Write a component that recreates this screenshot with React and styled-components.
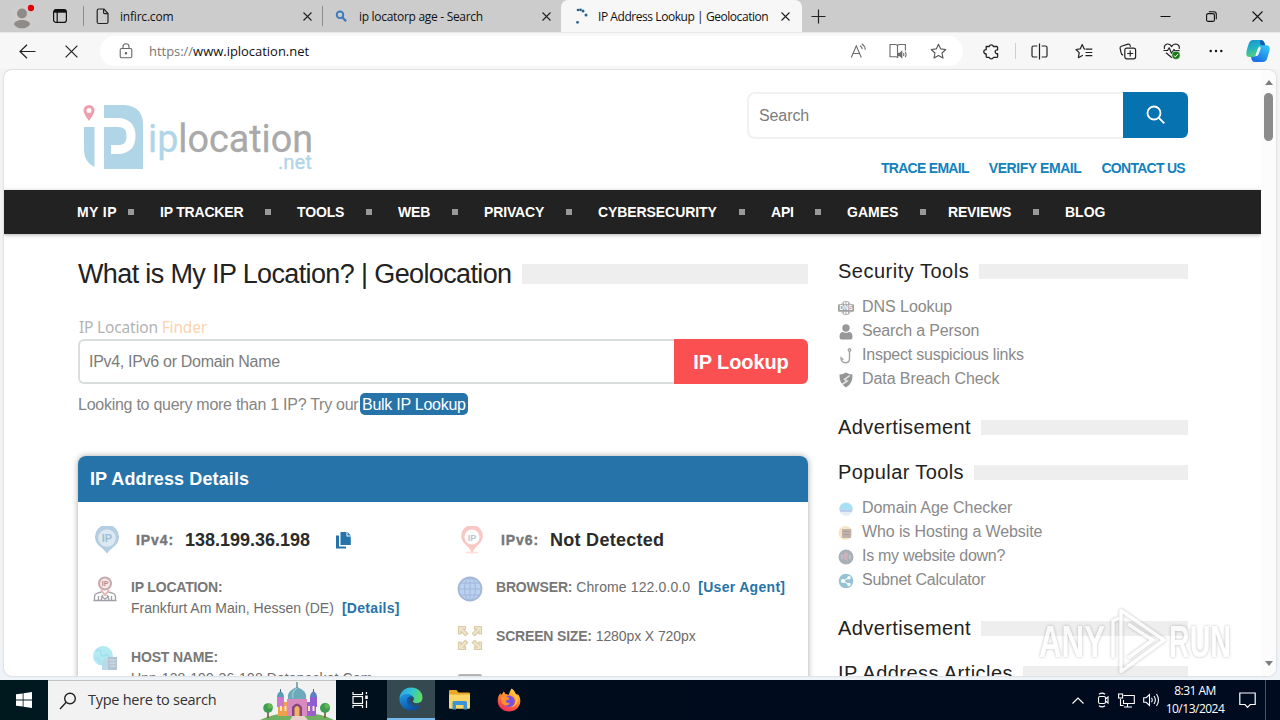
import React from "react";
import styled, { createGlobalStyle } from "styled-components";

const navItems = [
  { label: "MY IP", width: 83, ls: 0.4 },
  { label: "IP TRACKER", width: 137, ls: -0.2 },
  { label: "TOOLS", width: 101, ls: -0.15 },
  { label: "WEB", width: 86, ls: -0.2 },
  { label: "PRIVACY", width: 114, ls: -0.15 },
  { label: "CYBERSECURITY", width: 173, ls: -0.08 },
  { label: "API", width: 76, ls: -0.2 },
  { label: "GAMES", width: 101, gap: 22, ls: 0 },
  { label: "REVIEWS", width: 117, ls: -0.2 },
  { label: "BLOG", width: 60, ls: 0, last: true },
];

const topLinks = [
  { label: "TRACE EMAIL", ls: -0.72 },
  { label: "VERIFY EMAIL", ls: -0.42 },
  { label: "CONTACT US", ls: -0.72 },
];

const securityTools = [
  { label: "DNS Lookup", ls: -0.05, icon: <DnsIcon /> },
  { label: "Search a Person", ls: -0.13, icon: <PersonIcon /> },
  { label: "Inspect suspicious links", ls: -0.23, icon: <HookIcon /> },
  { label: "Data Breach Check", ls: -0.08, icon: <ShieldIcon /> },
];

const popularTools = [
  { label: "Domain Age Checker", ls: -0.05, icon: <DomainIcon /> },
  { label: "Who is Hosting a Website", ls: -0.11, icon: <HostingIcon /> },
  { label: "Is my website down?", ls: -0.29, icon: <DownIcon /> },
  { label: "Subnet Calculator", ls: -0.23, icon: <SubnetIcon /> },
];

export default function App() {
  return (
    <Screen>
      <GlobalStyle />
      <TabStrip />
      <Toolbar />
      <PageArea>
        <PageFrame>
          <PageContent>
            <SiteHeader />
            <SiteNav />
            <Columns>
              <MainColumn />
              <SideColumn />
            </Columns>
          </PageContent>
          <ScrollBar>
            <Arrow $up />
            <Thumb />
            <Arrow />
          </ScrollBar>
        </PageFrame>
      </PageArea>
      <Watermark />
      <Taskbar />
    </Screen>
  );
}

function TabStrip() {
  return (
    <Tabs>
      <Slot $width={44}>
        <svg width="24" height="28" viewBox="0 0 24 28">
          <circle cx="12" cy="14" r="11" fill="#d0cecd" />
          <circle cx="12" cy="11.500" r="5" fill="#8f8b88" />
          <path d="M4 22.500c0-3 4-4.500 8-4.500s8 1.500 8 4.500c-2 3-5 3.800-8 3.800S6 25.500 4 22.500z" fill="#8f8b88" />
          <circle cx="21" cy="6" r="3.200" fill="#e3000b" />
        </svg>
      </Slot>
      <Slot $width={32}>
        <svg width="16" height="16" viewBox="0 0 16 16" fill="none" stroke="#111" strokeWidth="1.200">
          <rect x="1.600" y="1.600" width="12.800" height="12.800" rx="2.500" />
          <path d="M2 3.200h12" strokeWidth="3" />
          <path d="M5.200 3v11" />
        </svg>
      </Slot>
      <TabDivider $left={7} />
      <Tab $width={238}>
        <svg width="13" height="17" viewBox="0 0 13 17" fill="none" stroke="#222" strokeWidth="1.200">
          <path d="M1.200 2.500q0-1.500 1.500-1.500H8l4 4.500V14q0 1.500-1.500 1.500h-7.800q-1.500 0-1.500-1.500z" />
          <path d="M7.600 1v3.500q0 1.200 1.200 1.200H12" />
        </svg>
        <TabTitle $gap={11} $ls={-0.2}>infirc.com</TabTitle>
        <CloseIcon />
      </Tab>
      <TabDivider />
      <Tab $width={238}>
        <svg width="13" height="17" viewBox="0 0 13 17" fill="none" stroke="#3a7abf">
          <circle cx="5" cy="6.800" r="3.300" strokeWidth="1.900" />
          <path d="M7.500 9.500l3.600 3.700" strokeWidth="2.300" />
        </svg>
        <TabTitle $gap={11} $ls={-0.3}>ip locatorp age - Search</TabTitle>
        <CloseIcon />
      </Tab>
      <Tab $width={241} $active>
        <svg width="14" height="17" viewBox="0 0 14 17">
          <g fill="#28608f">
            <circle cx="3" cy="2" r="1.300" />
            <circle cx="5.500" cy="1.800" r="1.400" />
            <circle cx="8" cy="3" r="1.500" />
            <circle cx="11" cy="7" r="1.500" />
            <circle cx="2.500" cy="14.300" r="1.400" />
          </g>
        </svg>
        <TabTitle $gap={9} $ls={-0.44}>IP Address Lookup | Geolocation</TabTitle>
        <CloseIcon />
      </Tab>
      <Slot $width={33}>
        <svg width="15" height="15" viewBox="0 0 15 15" stroke="#222" strokeWidth="1.200">
          <path d="M7.500 .5v14M.5 7.500h14" />
        </svg>
      </Slot>
      <Spacer />
      <Slot $width={46}>
        <svg width="11" height="11" viewBox="0 0 11 11" stroke="#111">
          <path d="M.5 5.500h10" />
        </svg>
      </Slot>
      <Slot $width={46}>
        <svg width="11" height="11" viewBox="0 0 11 11" fill="none" stroke="#111" strokeWidth="1.100">
          <rect x=".6" y="2.600" width="7.800" height="7.800" rx="1.500" />
          <path d="M2.800 .7h5q2.500 0 2.500 2.500v5" />
        </svg>
      </Slot>
      <Slot $width={46}>
        <svg width="11" height="11" viewBox="0 0 11 11" stroke="#111" strokeWidth="1.100">
          <path d="M.5 .5l10 10M10.500 .5l-10 10" />
        </svg>
      </Slot>
    </Tabs>
  );
}

function CloseIcon() {
  return (
    <svg width="9" height="9" viewBox="0 0 9 9" stroke="#222" strokeWidth="1.100">
      <path d="M.5 .5l8 8M8.500 .5l-8 8" />
    </svg>
  );
}

function Toolbar() {
  return (
    <Bar>
      <Slot $width={55}>
        <svg width="17" height="15" viewBox="0 0 17 15" fill="none" stroke="#222" strokeWidth="1.200">
          <path d="M16.500 7.500H1M8 .7L1 7.500l7 6.800" />
        </svg>
      </Slot>
      <Slot $width={33}>
        <svg width="13" height="13" viewBox="0 0 13 13" stroke="#222" strokeWidth="1.200">
          <path d="M.6 .6l11.800 11.800M12.400 .6L.6 12.400" />
        </svg>
      </Slot>
      <AddressBar>
        <LockSlot>
          <svg width="14" height="16" viewBox="0 0 14 16" fill="none" stroke="#666" strokeWidth="1.100">
            <rect x="1.200" y="5.500" width="11.600" height="9.300" rx="1.600" />
            <path d="M4 5.500V3.700a3 3 0 0 1 6 0v1.800" />
            <circle cx="7" cy="10.200" r=".7" fill="#444" />
          </svg>
        </LockSlot>
        <Url>
          <span>https://</span>www.iplocation.net
        </Url>
        <Spacer />
        <Slot $width={40}>
          <svg width="17" height="16" viewBox="0 0 17 16" fill="none" stroke="#6b6b6b" strokeWidth="1.100">
            <path d="M1.300 14.500L6.300 2.800l5 11.700M3 10.500h6.600M10 2.800q2 1.300 2.300 3.400M11.700 .7q3.300 2 3.600 6" />
          </svg>
        </Slot>
        <Slot $width={40}>
          <svg width="18" height="16" viewBox="0 0 18 16" fill="none" stroke="#6b6b6b" strokeWidth="1.100">
            <path d="M8.500 2.500v11M8.500 2.500Q7.500 1.500 6 1.500H1v12.300h6q1 0 1.500.7l.8-.7M8.500 2.500Q9.500 1.500 11 1.500h5.400v6" />
            <path d="M9.500 10.300h1.300l2-1.800v6l-2-1.800H9.500z" fill="#6b6b6b" />
            <path d="M14.400 10q1 1.500 0 3M16.100 8.700q2 2.800 0 5.600" />
          </svg>
        </Slot>
        <Slot $width={40}>
          <svg width="17" height="17" viewBox="0 0 17 17" fill="none" stroke="#555" strokeWidth="1.100" strokeLinejoin="round">
            <path d="M8.500 1.200l2.200 4.700 5.100.6-3.800 3.500 1 5.100-4.500-2.500L4 15.100l1-5.100L1.200 6.500l5.100-.6z" />
          </svg>
        </Slot>
      </AddressBar>
      <Slot $width={44} $left={6}>
        <svg width="17" height="17" viewBox="0 0 17 17" fill="none" stroke="#222" strokeWidth="1.300" strokeLinejoin="round">
          <path d="M3.200 3.500h3a2.200 2.200 0 0 1 4.200 0h3.200q1 0 1 1v2.400c-3.200-.4-3.200 4.200 0 3.800v2.700q0 1-1 1h-3.200a2.200 2.200 0 0 1-4.200 0h-2q-1 0-1-1v-2.500c-3.200 0-3.200-4.200 0-4.200z" />
        </svg>
      </Slot>
      <ToolDivider />
      <Slot $width={43}>
        <svg width="17" height="17" viewBox="0 0 17 17" fill="none" stroke="#222" strokeWidth="1.200">
          <path d="M8.500 .5v16M6.300 3H2.600Q1 3 1 4.600v7.800Q1 14 2.600 14h3.700M10.700 3h3.700Q16 3 16 4.600v7.800Q16 14 14.400 14h-3.700" />
        </svg>
      </Slot>
      <Slot $width={45}>
        <svg width="18" height="17" viewBox="0 0 18 17" fill="none" stroke="#222" strokeWidth="1.200" strokeLinejoin="round">
          <path d="M10 6.100L9.200 5.900 7.200 1.500l-2 4.400L1 6.500l3.200 3.200-.8 5 4.500-2.400" />
          <path d="M10.500 6.200h6.800M10.500 9.500h6.800M10.500 12.700h6.800" />
        </svg>
      </Slot>
      <Slot $width={44}>
        <svg width="18" height="17" viewBox="0 0 18 17" fill="none" stroke="#222" strokeWidth="1.200">
          <path d="M4.200 12.300Q2.700 11.800 2.200 10L1.100 5.300Q.8 3.700 2.400 3.200L9 1.200q1.600-.4 2.100 1.200l.5 1.400" />
          <rect x="5.800" y="5.200" width="10.800" height="10.600" rx="2" />
          <path d="M11.200 7.500v6M8.200 10.500h6" />
        </svg>
      </Slot>
      <Slot $width={44}>
        <svg width="18" height="18" viewBox="0 0 18 18" fill="none" stroke="#222" strokeWidth="1.200" strokeLinejoin="round">
          <path d="M1.500 7C.5 3.700 3 1.800 5 2c2 .2 3 1.300 3.700 2.600C9.500 3 11 2 12.800 2c2.700.2 4.200 2.500 3.300 5" />
          <path d="M.5 8.500h4l1.700-2.700 2.400 5.600L11 7.500l.8 1.200h4.700M3 10.800l6 5" />
          <circle cx="13" cy="13.300" r="4.100" fill="#177a17" stroke="#f7f7f7" strokeWidth=".6" />
          <path d="M10.800 13.500l1.600 1.400 2.800-3" stroke="#fff" strokeWidth="1" />
        </svg>
      </Slot>
      <Slot $width={44}>
        <svg width="14" height="4" viewBox="0 0 14 4" fill="#111">
          <circle cx="1.700" cy="2" r="1.200" />
          <circle cx="7" cy="2" r="1.200" />
          <circle cx="12.300" cy="2" r="1.200" />
        </svg>
      </Slot>
      <Slot $width={40}>
        <CopilotIcon />
      </Slot>
    </Bar>
  );
}

function CopilotIcon() {
  return (
    <svg width="24" height="24" viewBox="0 0 24 24">
      <defs>
        <linearGradient id="copA" x1="0" y1="0" x2="0.300" y2="1">
          <stop offset="0" stopColor="#1b8fd6" />
          <stop offset="0.500" stopColor="#1fb3c4" />
          <stop offset="1" stopColor="#57cf78" />
        </linearGradient>
        <linearGradient id="copB" x1="0" y1="1" x2="0.600" y2="0">
          <stop offset="0" stopColor="#1461e0" />
          <stop offset="1" stopColor="#33bdf5" />
        </linearGradient>
      </defs>
      <path d="M7 1h8q2.500 0 3.300 2.500L19.500 7H15q-2 0-2.800 2.300L10 16q-.8 2-3 2H3.500Q.2 18 .3 14.500.5 12 1.600 8L3 4q1.200-3 4-3z" fill="url(#copA)" />
      <path d="M17 23H9q-2.500 0-3.300-2.300L5 17.800h2.600q2 0 2.800-2.300L13.500 8q.6-1.800 3-1.800h4q3.300 0 3.200 3.800-.2 2.500-1.500 6L21 20q-1.200 3-4 3z" fill="url(#copB)" />
      <path d="M14.600 1q2.900 0 3.700 2.500l.9 2.700h-3.300Q14.500 6 14 4z" fill="#1559b5" />
      <path d="M11.600 10.200q.8-2.200 2.700-2.200.7.400.2 2l-2 5.300q-.8 1.900-2.700 1.900-.4-.6 0-1.800z" fill="#eefaff" />
    </svg>
  );
}

function SiteHeader() {
  return (
    <Header>
      <LogoSvg width="240" height="74" viewBox="0 0 240 74">
        <path d="M2 25h10.500v40Q2 60 2 48z" fill="#b0d5e7" />
        <path d="M22 3h20q19 1 19 20v44H22z" fill="#b0d5e7" />
        <path d="M22 20.500h13.500q13.500 0 13.500 13.500t-13.500 13.500H29" fill="none" stroke="#fff" strokeWidth="9" />
        <path d="M7 19Q1.500 11.500 1.500 8.500a5.500 5.500 0 0 1 11 0Q12.500 11.500 7 19z" fill="#ee9fae" />
        <circle cx="7" cy="8.500" r="2.500" fill="#fff" />
        <text x="66" y="49.500" textLength="165" lengthAdjust="spacingAndGlyphs" fontFamily="Roboto, sans-serif" fontSize="39" fill="#a9a9a9" stroke="#a9a9a9" strokeWidth=".3">
          <tspan fill="#b0d5e7" stroke="#b0d5e7">ip</tspan>location
        </text>
        <text x="196" y="67" textLength="34" lengthAdjust="spacingAndGlyphs" fontFamily="Roboto, sans-serif" fontSize="21" fill="#b0d5e7" stroke="#b0d5e7" strokeWidth=".3">
          .net
        </text>
      </LogoSvg>
      <HeaderRight>
        <SearchBox>
          <SearchInput>Search</SearchInput>
          <SearchButton>
            <svg width="20" height="20" viewBox="0 0 20 20" fill="none" stroke="#fff" strokeWidth="1.800">
              <circle cx="8" cy="8" r="6.500" />
              <path d="M12.500 12.500l5.800 5.800" />
            </svg>
          </SearchButton>
        </SearchBox>
        <TopLinks>
          {topLinks.map((link) => (
            <TopLink key={link.label} $ls={link.ls}>
              {link.label}
            </TopLink>
          ))}
        </TopLinks>
      </HeaderRight>
    </Header>
  );
}

function SiteNav() {
  return (
    <Nav>
      {navItems.map((item) => (
        <NavItem key={item.label} $width={item.width} $gap={item.gap || 26} $ls={item.ls}>
          {item.label}
          {!item.last && <i />}
        </NavItem>
      ))}
    </Nav>
  );
}

function MainColumn() {
  return (
    <Main>
      <PageTitle>
        <h1>What is My IP Location? | Geolocation</h1>
        <TitleBar $height={20} />
      </PageTitle>
      <FinderLabel>
        IP Location <span>Finder</span>
      </FinderLabel>
      <LookupForm>
        <LookupInput>IPv4, IPv6 or Domain Name</LookupInput>
        <LookupButton>IP Lookup</LookupButton>
      </LookupForm>
      <BulkLine>
        <span>Looking to query more than 1 IP? Try our</span>
        <BulkLink>Bulk IP Lookup</BulkLink>
      </BulkLine>
      <Card>
        <CardHeader>IP Address Details</CardHeader>
        <CardBody>
          <CardColumn>
            <IpRow>
              <svg width="26" height="28" viewBox="0 0 26 28">
                <path d="M13 27.500Q10.500 24 6 20.500A12 12 0 1 1 20 20.500Q15.500 24 13 27.500z" fill="#b3cee0" />
                <circle cx="13" cy="12" r="8.800" fill="#dce9f3" />
                <text x="13" y="16" textAnchor="middle" fontFamily="Liberation Sans, sans-serif" fontWeight="700" fontSize="11" fill="#a0bfd4">IP</text>
              </svg>
              <IpLabel>IPv4:</IpLabel>
              <IpValue $ls={0}>138.199.36.198</IpValue>
              <CopyIcon />
            </IpRow>
            <DetailRow $height={70}>
              <LocationIcon />
              <DetailText>
                <Label>IP LOCATION:</Label>
                <div>
                  <Value $ls={0.02}>Frankfurt Am Main, Hessen (DE)</Value>
                  <DetailLink>[Details]</DetailLink>
                </div>
              </DetailText>
            </DetailRow>
            <DetailRow $height={70}>
              <HostIcon />
              <DetailText>
                <Label>HOST NAME:</Label>
                <Value $ls={0.1}>Unn-138-199-36-198.Datapacket.Com</Value>
              </DetailText>
            </DetailRow>
          </CardColumn>
          <CardColumn>
            <IpRow>
              <svg width="26" height="28" viewBox="0 0 26 28">
                <ellipse cx="13" cy="26.500" rx="7" ry="1.200" fill="#fbe3dd" />
                <path d="M13 26.500Q10.500 22 5.500 17.500A10.800 10.800 0 1 1 20.500 17.500Q15.500 22 13 26.500z" fill="#fac8c4" />
                <circle cx="13" cy="11" r="7.500" fill="#fff" />
                <text x="13" y="14.500" textAnchor="middle" fontFamily="Liberation Sans, sans-serif" fontWeight="700" fontSize="9" fill="#b5c6d5">IP</text>
              </svg>
              <IpLabel>IPv6:</IpLabel>
              <IpValue $ls={0.28}>Not Detected</IpValue>
            </IpRow>
            <DetailRow $height={49}>
              <GlobeIcon />
              <DetailText>
                <div>
                  <Label>BROWSER:</Label> <Value $ls={0.12}>Chrome 122.0.0.0</Value>
                  <DetailLink>[User Agent]</DetailLink>
                </div>
              </DetailText>
            </DetailRow>
            <DetailRow $height={49}>
              <ResizeIcon />
              <DetailText>
                <div>
                  <Label>SCREEN SIZE:</Label> <Value $ls={-0.1}>1280px X 720px</Value>
                </div>
              </DetailText>
            </DetailRow>
            <DetailRow $height={49}>
              <svg width="26" height="26" viewBox="0 0 26 26">
                <rect x="1" y="0" width="24" height="20" rx="2" fill="#b5b5b5" />
              </svg>
            </DetailRow>
          </CardColumn>
        </CardBody>
      </Card>
    </Main>
  );
}

function CopyIcon() {
  return (
    <CopySvg width="15" height="17" viewBox="0 0 15 17" fill="#2673aa">
      <path d="M4.500 0h6v4.500h4.300V13H4.500zM11.500 0l3.300 3.500h-3.300z" />
      <path d="M0 3.500h3v11h7V16.500H0z" />
    </CopySvg>
  );
}

function LocationIcon() {
  return (
    <svg width="26" height="26" viewBox="0 0 26 26" fill="none" stroke="#a0a0a8" strokeWidth="1.300">
      <path d="M2.500 24v-3q0-3 3-4l4-1M23.500 24v-3q0-3-3-4l-4-1M1.500 24.500h23M6.500 24v-4M19.500 24v-4M11 19l-2 5M15 19l2 5M9 20l4 3 4-3" />
      <path d="M9 14l4 5 4-5" stroke="#e8b1b1" strokeWidth="1.800" />
      <circle cx="13" cy="7.500" r="6" stroke="#c7a9ac" strokeWidth="2" fill="#f4e7e7" />
      <text x="13" y="10" textAnchor="middle" fontFamily="Liberation Sans, sans-serif" fontWeight="700" fontSize="7" fill="#b78e92" stroke="none">IP</text>
    </svg>
  );
}

function HostIcon() {
  return (
    <svg width="26" height="26" viewBox="0 0 26 26">
      <circle cx="11" cy="10" r="10" fill="#b2e9f3" />
      <path d="M4 5q5-3 5 2t5 2q5 1 2 5l-4 5M3 12q5 0 5 6" stroke="#a1e0eb" strokeWidth="1.500" fill="none" />
      <path d="M10 14l6-3v13h-6z" fill="#b7dbe7" />
      <rect x="16" y="11" width="9" height="13" fill="#b5c4d2" />
      <path d="M17.500 14h6M17.500 17h6M17.500 20h6" stroke="#d6e3ed" />
    </svg>
  );
}

function GlobeIcon() {
  return (
    <svg width="26" height="26" viewBox="0 0 26 26" fill="none" stroke="#a3b7d6">
      <circle cx="13" cy="13" r="11.500" fill="#bad1f4" strokeWidth="1.800" />
      <ellipse cx="13" cy="13" rx="5.500" ry="11.500" />
      <path d="M13 1.500v23M1.500 13h23M3.500 7h19M3.500 19h19" />
    </svg>
  );
}

function ResizeIcon() {
  const arrow = "M1.500 1.500h7v2.700l-2.200-.1 4.400 4.300-2.400 2.300L4 6.400v2.400H1.500z";
  return (
    <svg width="26" height="26" viewBox="0 0 26 26" fill="#efe6cd" stroke="#d9cda8" strokeWidth="1.200">
      <path d={arrow} />
      <path d={arrow} transform="matrix(-1 0 0 1 26 0)" />
      <path d={arrow} transform="matrix(1 0 0 -1 0 26)" />
      <path d={arrow} transform="matrix(-1 0 0 -1 26 26)" />
    </svg>
  );
}

function SideColumn() {
  return (
    <Aside>
      <SideTitle $ls={0.5}>Security Tools<TitleBar $height={15} /></SideTitle>
      <ToolList items={securityTools} />
      <SideTitle $ls={0.4}>Advertisement<TitleBar $height={15} /></SideTitle>
      <SideTitle $ls={0.4}>Popular Tools<TitleBar $height={15} /></SideTitle>
      <ToolList items={popularTools} />
      <SideTitle $ls={0.4}>Advertisement<TitleBar $height={15} /></SideTitle>
      <SideTitle $ls={0.45}>IP Address Articles<TitleBar $height={15} /></SideTitle>
    </Aside>
  );
}

function ToolList({ items }) {
  return (
    <List>
      {items.map((item) => (
        <li key={item.label}>
          {item.icon}
          <ToolName $ls={item.ls}>{item.label}</ToolName>
        </li>
      ))}
    </List>
  );
}

function DnsIcon() {
  return (
    <svg width="16" height="16" viewBox="0 0 16 16">
      <path d="M3 4.500Q8-2 13 4.500M3 11.500Q8 18 13 11.500M8 1v14M5.500 2v12M10.500 2v12" fill="none" stroke="#b0b0b0" />
      <rect x="0" y="4.300" width="16" height="7.400" rx="1" fill="#a0a0a0" />
      <text x="1.500" y="10.300" textLength="13" lengthAdjust="spacingAndGlyphs" fontFamily="Liberation Sans, sans-serif" fontSize="6.500" fontWeight="700" fill="#fff">DNS</text>
    </svg>
  );
}

function PersonIcon() {
  return (
    <svg width="16" height="16" viewBox="0 0 16 16" fill="#989898">
      <circle cx="8" cy="4" r="3.700" />
      <path d="M1.500 13q0-5 3.500-5 3 1.700 6 0 3.500 0 3.500 5 0 2.500-2 2.500h-9q-2 0-2-2.500z" />
    </svg>
  );
}

function HookIcon() {
  return (
    <svg width="16" height="16" viewBox="0 0 16 16" fill="none" stroke="#a5a5a5" strokeWidth="1.400">
      <circle cx="11.500" cy="1.900" r="1.200" />
      <path d="M11.500 3v7.500q0 4.300-4 4.300-4.500 0-4.500-5l2.500 2" />
    </svg>
  );
}

function ShieldIcon() {
  return (
    <svg width="16" height="16" viewBox="0 0 16 16">
      <path d="M8 .5q3 2 6.500 2 .5 9-6.500 13-7-4-6.500-13Q5 2.500 8 .5z" fill="#959595" />
      <path d="M12 3.500L6.500 7.300 9.300 9 4 12.500" fill="none" stroke="#e4e4e4" strokeWidth="1.500" />
    </svg>
  );
}

function DomainIcon() {
  return (
    <svg width="16" height="16" viewBox="0 0 16 16">
      <circle cx="8" cy="8" r="6.800" fill="#e2eef8" />
      <path d="M1.200 8.500a6.800 6.800 0 0 1 13.600 0z" fill="#a6e0f3" />
      <path d="M2 8.500h12v2.300H2z" fill="#b3caec" />
    </svg>
  );
}

function HostingIcon() {
  return (
    <svg width="16" height="16" viewBox="0 0 16 16">
      <circle cx="7.500" cy="8" r="7" fill="#f8e5c4" />
      <path d="M4 4h9v9H4z" fill="#c0b1aa" />
      <path d="M5.500 6.500h6M5.500 9.500h6" stroke="#aa9f9a" />
    </svg>
  );
}

function DownIcon() {
  return (
    <svg width="16" height="16" viewBox="0 0 16 16">
      <circle cx="8" cy="8" r="7.500" fill="#a9b0b7" />
      <path d="M7.500 3l3 2-1.500 4 1 3-3.500-1.500L5 6z" fill="#cfb1ba" />
      <path d="M4 6v4M12 6v4" stroke="#c2cdd5" strokeWidth="1.300" />
    </svg>
  );
}

function SubnetIcon() {
  return (
    <svg width="16" height="16" viewBox="0 0 16 16">
      <circle cx="8" cy="8" r="7.300" fill="#96c3d4" />
      <path d="M11 4.800L5 8l6 3.500" stroke="#e8f3f7" strokeWidth="1.200" fill="none" />
      <g fill="#fff">
        <circle cx="11" cy="4.800" r="1.700" />
        <circle cx="5" cy="8" r="2" />
        <circle cx="11" cy="11.500" r="1.700" />
      </g>
    </svg>
  );
}

function Watermark() {
  return (
    <WatermarkSvg width="220" height="76" viewBox="0 0 220 76" fontFamily="Liberation Sans, sans-serif" fontWeight="700" fontSize="45">
      <text x="6" y="53" textLength="66" lengthAdjust="spacingAndGlyphs">ANY</text>
      <text x="136" y="53" textLength="62" lengthAdjust="spacingAndGlyphs">RUN</text>
      <path d="M88 6.500v61l43-31.500zM95 20l26 17M95 54l26-19" fill="none" stroke="#fff" strokeWidth="3.500" strokeLinejoin="round" />
      <path d="M80 54V17l6-3" fill="none" stroke="#fff" strokeWidth="3.500" />
    </WatermarkSvg>
  );
}

function Taskbar() {
  return (
    <TaskbarRow>
      <Slot $width={48}>
        <svg width="16" height="16" viewBox="0 0 16 16" fill="#fff">
          <path d="M0 2.300L6.700 1.400v6.200H0zM7.500 1.200L16 0v7.600H7.500zM0 8.400h6.700v6.200L0 13.700zM7.500 8.400H16V16l-8.500-1.200z" />
        </svg>
      </Slot>
      <TaskSearch>
        <svg width="18" height="18" viewBox="0 0 18 18" fill="none" stroke="#222" strokeWidth="1.400">
          <circle cx="11" cy="6.500" r="5.300" />
          <path d="M7.200 10.300L1 17" />
        </svg>
        <span>Type here to search</span>
        <PalaceIcon />
      </TaskSearch>
      <Slot $width={49}>
        <svg width="17" height="16" viewBox="0 0 17 16" fill="none" stroke="#fff" strokeWidth="1.200">
          <path d="M1 0v2.500h9.500V0M1 16v-2.500h9.500V16M14.500 0v2M14.500 8.500V16" />
          <rect x="1" y="4.500" width="9.500" height="7" />
          <path d="M14.500 3.500v3.500" strokeWidth="2.500" />
        </svg>
      </Slot>
      <TaskApp $active>
        <EdgeIcon />
      </TaskApp>
      <TaskApp>
        <svg width="22" height="20" viewBox="0 0 22 20">
          <path d="M0 1q0-1 1-1h6.500l2 2.500H20q1 0 1 1V18H0z" fill="#e9a825" />
          <path d="M0 4.500h21V18q0 .8-1 .8H1q-1 0-1-.8z" fill="#fbd667" />
          <path d="M3.500 19.500v-7q0-1.500 1.500-1.500h11.500q1.500 0 1.500 1.500v7h-3.500V15h-7.500v4.500z" fill="#3b94d6" />
        </svg>
      </TaskApp>
      <TaskApp>
        <FirefoxIcon />
      </TaskApp>
      <Spacer />
      <Slot $width={26}>
        <svg width="12" height="7" viewBox="0 0 12 7" fill="none" stroke="#fff" strokeWidth="1.200">
          <path d="M.5 6.500L6 1l5.500 5.500" />
        </svg>
      </Slot>
      <Slot $width={23}>
        <svg width="12" height="16" viewBox="0 0 12 16" fill="none" stroke="#fff" strokeWidth="1.100">
          <path d="M2 2.200Q5 0 8 2.200M2 13.800q3 2.200 6 0M8.500 7l2.500-2v6L8.500 9" />
          <rect x="1.500" y="4.500" width="7" height="7" rx="1.500" />
        </svg>
      </Slot>
      <Slot $width={25}>
        <svg width="17" height="15" viewBox="0 0 17 15" fill="none" stroke="#fff" strokeWidth="1.100">
          <path d="M5.500 2.500h10.800v8H5.500V7M9.500 10.500v3M6 14h8M2.500 6v6.500h3" />
          <rect x=".6" y="1" width="4" height="4" />
        </svg>
      </Slot>
      <Slot $width={24}>
        <svg width="17" height="14" viewBox="0 0 17 14" fill="none" stroke="#fff" strokeWidth="1.100">
          <path d="M.7 4.700h2.500L6.500 1.500v11L3.200 9.300H.7zM8.500 4.700q1.500 2.300 0 4.600M11 3q2.700 4 0 8M13.500 1q4 6 0 12" />
        </svg>
      </Slot>
      <Clock>
        <span>8:31 AM</span>
        <span>10/13/2024</span>
      </Clock>
      <Slot $width={36}>
        <svg width="17" height="17" viewBox="0 0 17 17" fill="none" stroke="#fff" strokeWidth="1.200">
          <path d="M.8 1h15.400v11.500h-5L8.500 15.300 6 12.500H.8z" />
        </svg>
      </Slot>
      <ShowDesktop />
    </TaskbarRow>
  );
}

function PalaceIcon() {
  return (
    <svg width="76" height="38" viewBox="0 0 76 38">
      <path d="M1 38Q20 29 38 32q20-3 37 6z" fill="#6fb063" />
      <path d="M31 38q5-8 5-9h5l8 9z" fill="#e7d2cb" />
      <rect x="19" y="20" width="38" height="14" fill="#c77bbd" />
      <rect x="19" y="20" width="11" height="14" fill="#f0a04b" />
      <rect x="46" y="20" width="11" height="14" fill="#9c5fc9" />
      <rect x="28" y="17" width="20" height="17" fill="#d98abf" />
      <path d="M33 34V25q5-7 10 0v9z" fill="#84477a" />
      <path d="M35.500 34v-8q2.500-4 5 0v8z" fill="#f4b265" />
      <path d="M29 17q-2-8 9-12 11 4 9 12z" fill="#6ba9bb" />
      <path d="M38 0v6" stroke="#4c8293" strokeWidth="1.300" />
      <path d="M34 16q-2-6 4-10" stroke="#94c9d4" strokeWidth="1.500" fill="none" />
      <g>
        <rect x="18" y="15" width="7" height="10" fill="#cb7ac9" />
        <path d="M18 15q0-4 3.500-6 3.500 2 3.500 6z" fill="#5a9cb5" />
        <rect x="51" y="15" width="7" height="10" fill="#8d5ed0" />
        <path d="M51 15q0-4 3.500-6 3.500 2 3.500 6z" fill="#5a83c0" />
        <path d="M21.500 7v3M54.500 7v3" stroke="#486b8a" />
      </g>
      <g fill="#fbe2c8">
        <rect x="21" y="24" width="2" height="5" />
        <rect x="25.500" y="24" width="2" height="5" />
        <rect x="49" y="24" width="2" height="5" />
        <rect x="53.500" y="24" width="2" height="5" />
      </g>
      <path d="M9 27v9M66 27v9" stroke="#7a5736" strokeWidth="1.600" />
      <circle cx="9" cy="26" r="4.800" fill="#3f9d52" />
      <circle cx="11" cy="24" r="2.500" fill="#63b757" />
      <circle cx="66" cy="26" r="5" fill="#3f9d52" />
      <circle cx="68" cy="24" r="2.500" fill="#63b757" />
    </svg>
  );
}

function EdgeIcon() {
  return (
    <svg width="24" height="24" viewBox="0 0 24 24">
      <defs>
        <linearGradient id="edgeTop" x1="0" y1="0.300" x2="1" y2="0.500">
          <stop offset="0" stopColor="#2aa6e8" />
          <stop offset="0.500" stopColor="#33c5cf" />
          <stop offset="1" stopColor="#62dd5b" />
        </linearGradient>
        <linearGradient id="edgeLow" x1="0" y1="0" x2="0.600" y2="1">
          <stop offset="0" stopColor="#1f9be6" />
          <stop offset="1" stopColor="#0c4ea3" />
        </linearGradient>
      </defs>
      <path d="M.5 12C.5 5 6 .5 12 .5c7 0 11.500 4.500 11.500 10 0 4-3 6-6 6-2.500 0-4-1-3.500-2.500.5-1 1-2 .5-3.500C13 7.500 8 6 .5 12z" fill="url(#edgeTop)" />
      <path d="M.5 12C2 8 6 6.500 9.500 7c3 .5 5 2.500 5 4.500-5-1.500-6 3-4 6 2.500 3.500 7 3.500 11 1.200C19 22 16 23.500 12 23.500 5 23.500.3 18 .5 12z" fill="url(#edgeLow)" />
      <path d="M8 13.500c.2-3 2.500-5 5.500-4 1.500 1.500 1 3 .5 4-1 2 1 3 3.500 3q2-.1 3.500-1.200c.7 1 .5 2.500.3 3.500C14 22.500 8 19 8 13.500z" fill="#11569f" />
      <path d="M13.200 10c1.600 1 1.300 2.700.8 3.700-.6 1.500.8 2.500 3.500 2.800 2.500.2 4-.5 5.500-1.800-.3 1.500-1 2.500-1.800 3.300-4 2-10.200.2-10.200-5 .2-1.800 1-3 2.200-3z" fill="#354a50" />
    </svg>
  );
}

function FirefoxIcon() {
  return (
    <svg width="24" height="24" viewBox="0 0 24 24">
      <defs>
        <linearGradient id="fox" x1="0.800" y1="0" x2="0.300" y2="1">
          <stop offset="0" stopColor="#ffe14a" />
          <stop offset="0.450" stopColor="#ff8b2b" />
          <stop offset="1" stopColor="#f0265c" />
        </linearGradient>
      </defs>
      <path d="M14.500.5c2 1 3.500 3 4 5 .8.3 1.500 1 2 2V5.500c2 2.500 3 5 2.800 8C23 19.500 18 23.500 12 23.500S.7 19 .7 13c0-3.500 1-6 2.800-8l.3 2.200C5 6 6 5.300 6.500 3.500 7.500 4 8 5 8.200 6q2 0 3.300 1c1-2.500 2-4.500 3-6.500z" fill="url(#fox)" />
      <circle cx="12" cy="13.300" r="5.800" fill="#7950df" />
      <path d="M4 10q2-3 7-1l1.500 2.300-4 1.500q1 3 4.500 2.500-2 3-5.500 2Q3.500 15 4 10z" fill="#ff932e" />
      <path d="M15 3q1 4 3 6c2 4 0 9-5 10 7 0 9-5 7-11z" fill="#ffca3e" opacity=".8" />
    </svg>
  );
}

const GlobalStyle = createGlobalStyle`
  * {
    box-sizing: border-box;
  }

  body {
    margin: 0;
    overflow: hidden;
  }

  svg {
    flex-shrink: 0;
    display: block;
  }
`;

const sans = `"Liberation Sans", Arial, sans-serif`;
const ui = `"Open Sans", "Noto Sans", sans-serif`;

const Screen = styled.div`
  display: flex;
  flex-direction: column;
  position: relative;
  width: 1280px;
  height: 720px;
  overflow: hidden;
  background: #f7f7f7;
  font-family: ${sans};
  white-space: nowrap;
`;

const Slot = styled.div`
  display: flex;
  align-items: center;
  justify-content: center;
  flex-shrink: 0;
  width: ${(p) => p.$width}px;
  margin-left: ${(p) => p.$left || 0}px;
`;

const Spacer = styled.div`
  flex: 1;
`;

const Tabs = styled.div`
  display: flex;
  align-items: center;
  height: 32px;
  background: #cccccc;
`;

const TabDivider = styled.div`
  width: 1px;
  height: 20px;
  margin-left: ${(p) => p.$left || 0}px;
  background: #8d8d8d;
`;

const Tab = styled.div`
  display: flex;
  align-items: center;
  width: ${(p) => p.$width}px;
  height: 32px;
  padding: 0 ${(p) => (p.$active ? 12 : 10)}px 0 ${(p) => (p.$active ? 14 : 12)}px;
  border-radius: 7px 7px 0 0;
  background: ${(p) => (p.$active ? "#f7f7f7" : "transparent")};
`;

const TabTitle = styled.div`
  flex: 1;
  margin-left: ${(p) => p.$gap}px;
  font-family: ${ui};
  font-size: 12px;
  letter-spacing: ${(p) => p.$ls}px;
  color: #111;
`;

const Bar = styled.div`
  display: flex;
  align-items: center;
  height: 37px;
  border-top: 1px solid #e9e9e9;
  background: #f7f7f7;
`;

const AddressBar = styled.div`
  display: flex;
  align-items: center;
  width: 863px;
  height: 30px;
  margin-left: 12px;
  padding-right: 5px;
  border-radius: 15px;
  background: #fff;
`;

const LockSlot = styled.div`
  width: 30px;
  margin-left: 19px;
`;

const Url = styled.div`
  font-family: ${ui};
  font-size: 13px;
  letter-spacing: -0.03px;
  color: #111;

  span {
    color: #777;
  }
`;

const ToolDivider = styled.div`
  width: 1px;
  height: 16px;
  margin: 0 2px;
  background: #cfcfcf;
`;

const PageArea = styled.div`
  height: 611px;
  padding: 1px 4px 4px;
  background: linear-gradient(#f3f3f3 90%, #eff4f9);
`;

const PageFrame = styled.div`
  display: flex;
  height: 606px;
  border-radius: 8px;
  overflow: hidden;
  background: #fff;
  box-shadow: 0 0 2px rgba(0, 0, 0, 0.25);
`;

const PageContent = styled.div`
  width: 1257px;
`;

const ScrollBar = styled.div`
  display: flex;
  flex-direction: column;
  align-items: center;
  width: 15px;
  padding: 10px 0;
  background: #fcfcfc;
`;

const Arrow = styled.div`
  width: 0;
  margin-top: ${(p) => (p.$up ? 0 : "auto")};
  border: 4.5px solid transparent;
  border-top: ${(p) => (p.$up ? "0" : "5px solid #7d7d7d")};
  border-bottom: ${(p) => (p.$up ? "5px solid #7d7d7d" : "0")};
`;

const Thumb = styled.div`
  width: 9px;
  height: 48px;
  margin-top: 8px;
  border-radius: 5px;
  background: #8b8b8b;
`;

const Header = styled.header`
  display: flex;
  justify-content: space-between;
  height: 120px;
  padding: 22px 73px 0 78px;
`;

const LogoSvg = styled.svg`
  margin-top: 10px;
`;

const HeaderRight = styled.div`
  width: 441px;
`;

const SearchBox = styled.div`
  display: flex;
  height: 46px;
`;

const SearchInput = styled.div`
  flex: 1;
  height: 47px;
  padding-left: 10px;
  border: 2px solid #f1f1f1;
  border-right: 0;
  border-radius: 8px 0 0 8px;
  font-size: 16px;
  line-height: 43px;
  letter-spacing: -0.1px;
  color: #7c7c7c;
`;

const SearchButton = styled.div`
  display: flex;
  align-items: center;
  justify-content: center;
  width: 65px;
  border-radius: 0 6px 6px 0;
  background: #0672b0;
`;

const TopLinks = styled.div`
  display: flex;
  justify-content: flex-end;
  gap: 20px;
  padding: 22px 3px 0 0;
  font-size: 14px;
  line-height: 16px;
  font-weight: 700;
  color: #1282bd;
`;

const TopLink = styled.a`
  letter-spacing: ${(p) => p.$ls}px;
`;

const Nav = styled.nav`
  display: flex;
  height: 44px;
  padding-left: 73px;
  background: #222222;
  box-shadow: 0 1px 4px rgba(0, 0, 0, 0.3);
`;

const NavItem = styled.div`
  display: flex;
  align-items: center;
  width: ${(p) => p.$width}px;
  font-size: 14px;
  font-weight: 700;
  letter-spacing: ${(p) => p.$ls}px;
  color: #fff;

  i {
    width: 6px;
    height: 6px;
    margin-left: auto;
    margin-right: ${(p) => p.$gap}px;
    background: #999;
  }
`;

const Columns = styled.div`
  display: flex;
  gap: 30px;
  padding-left: 74px;
`;

const Main = styled.main`
  width: 730px;
  padding-top: 22px;
`;

const PageTitle = styled.div`
  display: flex;
  align-items: center;
  height: 36px;

  h1 {
    width: 444px;
    margin: 0;
    padding-top: 1px;
    font-size: 27px;
    font-weight: 400;
    letter-spacing: -0.63px;
    color: #222;
  }
`;

const TitleBar = styled.div`
  flex: 1;
  height: ${(p) => p.$height}px;
  background: #eeeeee;
`;

const FinderLabel = styled.div`
  height: 22px;
  margin-top: 25px;
  padding-left: 1px;
  font-family: "Noto Sans", sans-serif;
  font-size: 15.5px;
  line-height: 21px;
  letter-spacing: -0.18px;
  color: #b3b3b3;

  span {
    color: #fbd3ae;
  }
`;

const LookupForm = styled.div`
  display: flex;
  height: 45px;
`;

const LookupInput = styled.div`
  flex: 1;
  padding-left: 9px;
  border: 2px solid #dadddd;
  border-right: 0;
  border-radius: 6px 0 0 6px;
  font-size: 16px;
  line-height: 41px;
  letter-spacing: -0.3px;
  color: #7c7c7c;
`;

const LookupButton = styled.div`
  width: 134px;
  border-radius: 0 6px 6px 0;
  background: #fb5052;
  font-size: 20px;
  font-weight: 700;
  line-height: 46px;
  letter-spacing: -0.1px;
  text-align: center;
  color: #fff;
`;

const BulkLine = styled.div`
  display: flex;
  align-items: center;
  height: 22px;
  margin-top: 9px;
  font-size: 16px;
  line-height: 24px;
  letter-spacing: -0.26px;
  color: #858585;

  span {
    width: 282px;
    padding-top: 1px;
  }
`;

const BulkLink = styled.a`
  width: 108px;
  height: 22px;
  padding-left: 2px;
  border-radius: 5px;
  background: #2673aa;
  color: #fff;
`;

const Card = styled.section`
  height: 400px;
  margin-top: 41px;
  border-radius: 8px;
  background: #fff;
  box-shadow: 0 0 6px rgba(0, 0, 0, 0.35);
`;

const CardHeader = styled.div`
  height: 46px;
  padding-left: 12px;
  border-radius: 8px 8px 0 0;
  background: #2673aa;
  font-size: 18px;
  font-weight: 700;
  line-height: 46px;
  letter-spacing: 0.12px;
  color: #fff;
`;

const CardBody = styled.div`
  display: grid;
  grid-template-columns: 365px 365px;
`;

const CardColumn = styled.div`
  padding-left: 14px;
`;

const IpRow = styled.div`
  display: flex;
  align-items: center;
  height: 74px;
  padding: 2px 0 0 2px;
`;

const IpLabel = styled.div`
  width: 49px;
  margin-left: 16px;
  font-size: 14px;
  font-weight: 700;
  letter-spacing: 0.9px;
  -webkit-text-stroke: 0.4px #777;
  color: #777;
`;

const IpValue = styled.div`
  font-size: 18px;
  font-weight: 700;
  letter-spacing: ${(p) => p.$ls}px;
  color: #2b2b2b;
`;

const CopySvg = styled.svg`
  margin-left: 26px;
`;

const DetailRow = styled.div`
  display: flex;
  height: ${(p) => p.$height}px;
`;

const DetailText = styled.div`
  display: flex;
  flex-direction: column;
  margin-left: 13px;
  padding-top: 1px;
  font-size: 14px;
  line-height: 21px;
`;

const Label = styled.span`
  font-weight: 700;
  letter-spacing: -0.18px;
  color: #777;
`;

const Value = styled.span`
  letter-spacing: ${(p) => p.$ls || 0}px;
  color: #6c6c6c;
`;

const DetailLink = styled.a`
  margin-left: 8px;
  font-weight: 700;
  letter-spacing: 0.3px;
  color: #2673aa;
`;

const Aside = styled.aside`
  width: 350px;
  padding-top: 15px;
`;

const SideTitle = styled.h2`
  display: flex;
  align-items: center;
  gap: 10px;
  height: 45px;
  margin: 0;
  font-size: 20px;
  font-weight: 400;
  letter-spacing: ${(p) => p.$ls}px;
  color: #222;
`;

const List = styled.ul`
  height: 111px;
  margin: 0;
  padding: 0;
  list-style: none;

  li {
    display: flex;
    align-items: center;
    height: 24px;
    font-size: 16px;
    color: #8a8a8a;
  }

  svg {
    margin: 3px 8px 0 0;
  }
`;

const ToolName = styled.span`
  padding-top: 2px;
  letter-spacing: ${(p) => p.$ls}px;
`;

const WatermarkSvg = styled.svg`
  position: absolute;
  left: 1033px;
  top: 604px;
  fill: #fff;
  filter: drop-shadow(0 0 1.5px rgba(0, 0, 0, 0.4));
  opacity: 0.65;
`;

const TaskbarRow = styled.footer`
  display: flex;
  align-items: center;
  height: 40px;
  background: linear-gradient(90deg, #00191f, #000b1c 50%, #000b20);
`;

const TaskSearch = styled.div`
  display: flex;
  align-items: center;
  width: 288px;
  height: 40px;
  padding: 1px 1px 0 11px;
  border-top: 1px solid #c4c4c4;
  background: #f2f2f2;

  span {
    flex: 1;
    margin-left: 11px;
    font-family: ${ui};
    font-size: 14.5px;
    letter-spacing: -0.27px;
    line-height: 20px;
    margin-bottom: 2px;
    color: #333;
  }
`;

const TaskApp = styled.div`
  display: flex;
  align-items: center;
  justify-content: center;
  width: ${(p) => (p.$active ? 48 : 49)}px;
  height: 40px;
  margin-left: ${(p) => (p.$active ? 2 : 0)}px;
  border-bottom: ${(p) => (p.$active ? "2px solid #76b9ed" : "0")};
  background: ${(p) => (p.$active ? "#354a50" : "transparent")};
`;

const Clock = styled.div`
  display: flex;
  flex-direction: column;
  align-items: center;
  width: 66px;
  padding-right: 2px;
  font-family: ${ui};
  font-size: 12px;
  line-height: 18px;
  letter-spacing: -0.5px;
  color: #fff;
`;

const ShowDesktop = styled.div`
  width: 15px;
  height: 40px;
  border-left: 1px solid #4a5563;
`;
